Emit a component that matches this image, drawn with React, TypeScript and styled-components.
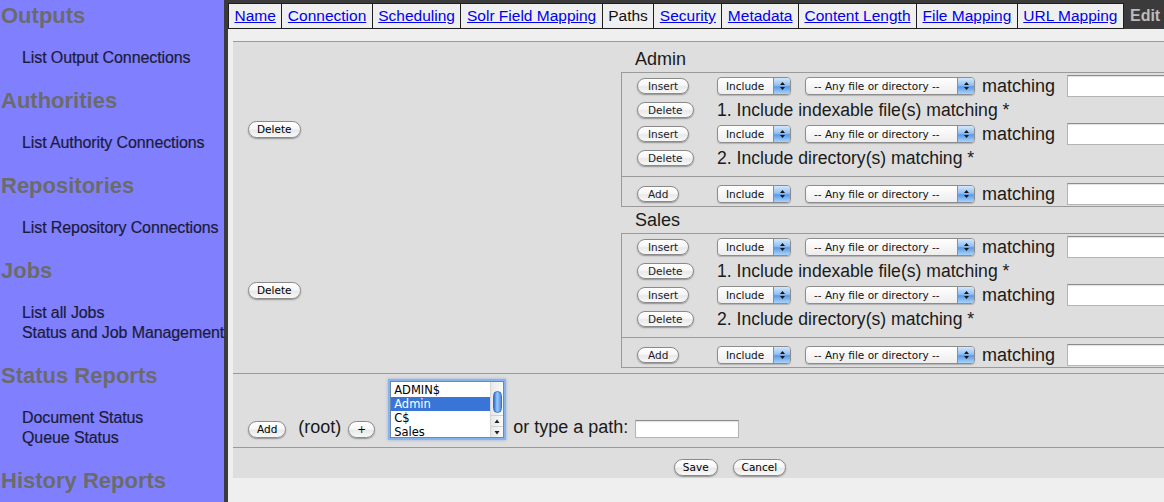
import React from "react";
import styled, { createGlobalStyle } from "styled-components";

const Global = createGlobalStyle`
  html, body { margin: 0; padding: 0; background: #3b3b3b; overflow: hidden; }
  body { font-family: "Liberation Sans", Arial, sans-serif; }
  * { box-sizing: border-box; }
`;

const Page = styled.div`
  display: flex;
  height: 502px;
  width: 100%;
  overflow: hidden;
  background: #3b3b3b;
`;

/* ---------- sidebar ---------- */
const Sidebar = styled.nav`
  flex: 0 0 224px;
  width: 224px;
  min-width: 0;
  background: #8080ff;
  padding-top: 3px;
`;
const Section = styled.div`
  margin-bottom: 20px;
`;
const SectionTitle = styled.div`
  font: bold 22px/26px "Liberation Sans", Arial, sans-serif;
  color: #6b6b6b;
  padding-left: 1px;
  margin-bottom: 19px;
  white-space: nowrap;
`;
const NavLink = styled.div`
  font: 16px/20px "Liberation Sans", Arial, sans-serif;
  color: #1b1b3a;
  padding-left: 22px;
  white-space: nowrap;
  letter-spacing: -0.1px;
  -webkit-text-stroke: 0.2px #1b1b3a;
`;

/* ---------- main column ---------- */
const Main = styled.div`
  flex: 0 0 1000px;
  min-width: 0;
  margin-left: 4px;
  display: flex;
  flex-direction: column;
  padding-top: 3px;
`;
const TabBar = styled.div`
  display: flex;
  height: 26px;
  white-space: nowrap;
`;
const Tab = styled.a<{ $active?: boolean }>`
  display: block;
  height: 26px;
  padding: 0 5.5px;
  line-height: 24px;
  background: #efefef;
  border: 1px solid #1e1e1e;
  border-left: none;
  font-size: 15.5px;
  font-family: "Liberation Sans", Arial, sans-serif;
  color: ${(p) => (p.$active ? "#111" : "#0000ee")};
  text-decoration: ${(p) => (p.$active ? "none" : "underline")};
  &:first-child {
    border-left: 1px solid #1e1e1e;
  }
`;
const TabTitle = styled.div`
  padding-left: 6px;
  font: bold 16px/26px "Liberation Sans", Arial, sans-serif;
  color: #bcbcbc;
`;
const Content = styled.div`
  flex: 1;
  background: #efefef;
  padding: 12px 0 0 5px;
`;
const Panel = styled.div`
  width: 994px;
  background: #dedede;
  border-top: 1px solid #9a9a9a;
  padding-top: 4px;
`;

/* ---------- path blocks ---------- */
const PathBlock = styled.div`
  display: grid;
  grid-template-columns: 388px 1fr;
`;
const LeftCell = styled.div`
  display: flex;
  align-items: center;
  padding: 6px 0 0 15px;
`;
const RightCell = styled.div`
  display: flex;
  flex-direction: column;
`;
const BlockLabel = styled.div`
  font: 18px/26px "Liberation Sans", Arial, sans-serif;
  color: #1a1a1a;
  padding-left: 14px;
`;
const RuleTable = styled.div`
  border: 1px solid #9a9a9a;
  margin-right: 5px;
  padding-top: 1px;
`;
const RuleRow = styled.div`
  display: flex;
  align-items: center;
  height: 24px;
  padding-left: 15px;
  white-space: nowrap;
`;
const RuleDivider = styled.div`
  margin: 6px 0 5px;
  border-top: 1px solid #9a9a9a;
`;
const ButtonSlot = styled.div`
  flex: 0 0 80px;
  display: flex;
  align-items: center;
`;
const BodyText = styled.span<{ $gap?: number }>`
  font: 18px/22px "Liberation Sans", Arial, sans-serif;
  color: #1a1a1a;
  margin-left: ${(p) => p.$gap ?? 0}px;
  white-space: nowrap;
`;
const RuleText = styled(BodyText)`
  font-size: 17.6px;
`;

/* ---------- controls ---------- */
const PillButton = styled.button<{ $size?: "sm" | "md"; $gap?: number }>`
  flex: none;
  font-family: "DejaVu Sans", "Liberation Sans", sans-serif;
  font-size: 10.5px;
  line-height: 1;
  height: ${(p) => (p.$size === "sm" ? 16 : 17)}px;
  padding: ${(p) => (p.$size === "sm" ? "0 10px" : "0 8px")};
  margin: 0 0 0 ${(p) => p.$gap ?? 0}px;
  border: 1px solid #8a8a8a;
  border-radius: 9px;
  background: linear-gradient(#ffffff 0%, #f7f7f7 45%, #e9e9e9 55%, #f8f8f8 100%);
  box-shadow: 0 1px 1.5px rgba(0, 0, 0, 0.35);
  color: ${(p) => (p.$size === "sm" ? "#1c1c2c" : "#000")};
  cursor: default;
`;
const SelectBox = styled.div<{ $w: number; $gap?: number }>`
  flex: none;
  display: inline-flex;
  align-items: stretch;
  width: ${(p) => p.$w}px;
  height: 18px;
  margin-left: ${(p) => p.$gap ?? 0}px;
  border: 1px solid #8d8d8d;
  border-radius: 4px;
  overflow: hidden;
  background: linear-gradient(#ffffff, #ededed);
  box-shadow: 0 1px 1px rgba(0, 0, 0, 0.2);
  font: 10.5px/16px "DejaVu Sans", "Liberation Sans", sans-serif;
  color: #111;
`;
const SelectText = styled.span`
  flex: 1;
  padding-left: 8px;
  white-space: nowrap;
  overflow: hidden;
`;
const SelectArrow = styled.span`
  flex: 0 0 17px;
  display: flex;
  align-items: center;
  justify-content: center;
  border-left: 1px solid #7791b8;
  background: linear-gradient(#d4e7fc 0%, #93c0f2 45%, #5a9ae8 55%, #a9d3fb 100%);
`;
const TextInput = styled.input<{ $w: number; $h: number; $gap?: number }>`
  flex: none;
  width: ${(p) => p.$w}px;
  height: ${(p) => p.$h}px;
  margin-left: ${(p) => p.$gap ?? 0}px;
  border: 1px solid #b4b4b4;
  border-top-color: #8c8c8c;
  background: #fff;
  box-shadow: inset 0 1px 1px rgba(0, 0, 0, 0.12);
  padding: 0 3px;
  outline: none;
`;

/* ---------- bottom rows ---------- */
const AddRow = styled.div`
  display: flex;
  align-items: flex-end;
  margin-top: 5px;
  border-top: 1px solid #9a9a9a;
  padding: 7px 0 9px 15px;
`;
const ActionRow = styled.div`
  display: flex;
  justify-content: center;
  gap: 15px;
  border-top: 1px solid #9a9a9a;
  padding: 11px 0 2px;
`;
const ListBox = styled.div`
  flex: none;
  display: flex;
  width: 114px;
  height: 57px;
  margin-left: 15px;
  border: 1px solid #6f87ad;
  background: #fff;
  box-shadow: 0 0 0 2px #86b3ea, 0 0 3px 2px rgba(90, 145, 225, 0.55);
`;
const ListItems = styled.div`
  flex: 1;
  padding-top: 1px;
  overflow: hidden;
`;
const ListItem = styled.div<{ $selected?: boolean }>`
  font: 11.5px/14px "DejaVu Sans", "Liberation Sans", sans-serif;
  padding-left: 3px;
  background: ${(p) => (p.$selected ? "#3875d7" : "transparent")};
  color: ${(p) => (p.$selected ? "#fff" : "#000")};
  white-space: nowrap;
`;
const ScrollTrack = styled.div`
  flex: 0 0 13px;
  display: flex;
  flex-direction: column;
  align-items: center;
  border-left: 1px solid #d6d6d6;
  background: linear-gradient(90deg, #e8e8e8, #fafafa);
`;
const ScrollThumb = styled.div`
  width: 9px;
  height: 22px;
  margin-top: 9px;
  border-radius: 5px;
  border: 1px solid #3d6fbf;
  background: linear-gradient(90deg, #2f6fd0, #9cc9fa 45%, #4f8fe3);
`;
const ScrollSpacer = styled.div`
  flex: 1;
`;
const ScrollArrow = styled.div`
  height: 11px;
  width: 100%;
  display: flex;
  align-items: center;
  justify-content: center;
  border-top: 1px solid #d0d0d0;
`;

const UpDown = () => (
  <svg width="7" height="10" viewBox="0 0 7 10">
    <path d="M3.5 1 L6 4 H1 Z M3.5 9 L6 6 H1 Z" fill="#161616" />
  </svg>
);
const Tri = ({ down }: { down?: boolean }) => (
  <svg width="6" height="5" viewBox="0 0 6 5">
    <path d={down ? "M0.5 1 H5.5 L3 4.5 Z" : "M3 0.5 L5.5 4 H0.5 Z"} fill="#222" />
  </svg>
);

const Select = ({ w, gap, label }: { w: number; gap?: number; label: string }) => (
  <SelectBox $w={w} $gap={gap}>
    <SelectText>{label}</SelectText>
    <SelectArrow>
      <UpDown />
    </SelectArrow>
  </SelectBox>
);

const RuleEditor = ({ button }: { button: string }) => (
  <RuleRow>
    <ButtonSlot>
      <PillButton $size="sm">{button}</PillButton>
    </ButtonSlot>
    <Select w={74} label="Include" />
    <Select w={170} gap={14} label="-- Any file or directory --" />
    <BodyText $gap={7}>matching</BodyText>
    <TextInput $w={140} $h={22} $gap={12} />
  </RuleRow>
);

const tabs = [
  "Name",
  "Connection",
  "Scheduling",
  "Solr Field Mapping",
  "Paths",
  "Security",
  "Metadata",
  "Content Length",
  "File Mapping",
  "URL Mapping",
];

const nav = [
  { title: "Outputs", links: ["List Output Connections"] },
  { title: "Authorities", links: ["List Authority Connections"] },
  { title: "Repositories", links: ["List Repository Connections"] },
  { title: "Jobs", links: ["List all Jobs", "Status and Job Management"] },
  { title: "Status Reports", links: ["Document Status", "Queue Status"] },
  { title: "History Reports", links: [] as string[] },
];

const paths = ["Admin", "Sales"];
const rules = ["1. Include indexable file(s) matching *", "2. Include directory(s) matching *"];

export default function App() {
  return (
    <>
      <Global />
      <Page>
        <Sidebar>
          {nav.map((s) => (
            <Section key={s.title}>
              <SectionTitle>{s.title}</SectionTitle>
              {s.links.map((l) => (
                <NavLink key={l}>{l}</NavLink>
              ))}
            </Section>
          ))}
        </Sidebar>
        <Main>
          <TabBar>
            {tabs.map((t) => (
              <Tab key={t} $active={t === "Paths"}>
                {t}
              </Tab>
            ))}
            <TabTitle>Edit</TabTitle>
          </TabBar>
          <Content>
            <Panel>
              {paths.map((p) => (
                <PathBlock key={p}>
                  <LeftCell>
                    <PillButton $size="md">Delete</PillButton>
                  </LeftCell>
                  <RightCell>
                    <BlockLabel>{p}</BlockLabel>
                    <RuleTable>
                      {rules.map((r) => (
                        <React.Fragment key={r}>
                          <RuleEditor button="Insert" />
                          <RuleRow>
                            <ButtonSlot>
                              <PillButton $size="sm">Delete</PillButton>
                            </ButtonSlot>
                            <RuleText>{r}</RuleText>
                          </RuleRow>
                        </React.Fragment>
                      ))}
                      <RuleDivider />
                      <RuleEditor button="Add" />
                    </RuleTable>
                  </RightCell>
                </PathBlock>
              ))}
              <AddRow>
                <PillButton $size="md">Add</PillButton>
                <BodyText $gap={12}>(root)</BodyText>
                <PillButton $size="md" $gap={7}>
                  +
                </PillButton>
                <ListBox>
                  <ListItems>
                    <ListItem>ADMIN$</ListItem>
                    <ListItem $selected>Admin</ListItem>
                    <ListItem>C$</ListItem>
                    <ListItem>Sales</ListItem>
                  </ListItems>
                  <ScrollTrack>
                    <ScrollThumb />
                    <ScrollSpacer />
                    <ScrollArrow>
                      <Tri />
                    </ScrollArrow>
                    <ScrollArrow>
                      <Tri down />
                    </ScrollArrow>
                  </ScrollTrack>
                </ListBox>
                <BodyText $gap={9}>or type a path:</BodyText>
                <TextInput $w={104} $h={18} $gap={7} />
              </AddRow>
              <ActionRow>
                <PillButton $size="md">Save</PillButton>
                <PillButton $size="md">Cancel</PillButton>
              </ActionRow>
            </Panel>
          </Content>
        </Main>
      </Page>
    </>
  );
}
